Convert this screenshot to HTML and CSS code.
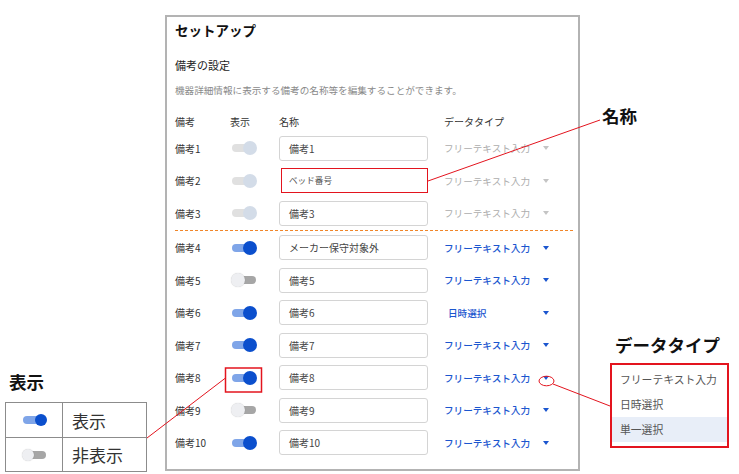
FILE: index.html
```html
<!DOCTYPE html>
<html lang="ja">
<head>
    <meta charset="UTF-8">
    <meta name="viewport" content="width=device-width, initial-scale=1.0">
    <title>セットアップ - 備考の設定</title>
    <link rel="stylesheet" href="styles.css">
</head>
<body>
    <div class="sheet">
        <section class="panel">
            <h1 class="panel-title">セットアップ</h1>
            <h2 class="group-title">備考の設定</h2>
            <p class="group-desc">機器詳細情報に表示する備考の名称等を編集することができます。</p>

            <div class="remarks">
                <div class="remarks-head">
                    <span>備考</span>
                    <span>表示</span>
                    <span>名称</span>
                    <span></span>
                    <span>データタイプ</span>
                </div>

                <div class="remark">
                    <span class="remark-label">備考1</span>
                    <span class="toggle is-disabled"></span>
                    <div class="name-input">備考1</div>
                    <span></span>
                    <div class="type-select is-disabled"><span>フリーテキスト入力</span><i class="caret"></i></div>
                </div>
                <div class="remark">
                    <span class="remark-label">備考2</span>
                    <span class="toggle is-disabled"></span>
                    <div class="name-input is-marked">ベッド番号</div>
                    <span></span>
                    <div class="type-select is-disabled"><span>フリーテキスト入力</span><i class="caret"></i></div>
                </div>
                <div class="remark">
                    <span class="remark-label">備考3</span>
                    <span class="toggle is-disabled"></span>
                    <div class="name-input">備考3</div>
                    <span></span>
                    <div class="type-select is-disabled"><span>フリーテキスト入力</span><i class="caret"></i></div>
                </div>

                <div class="divider"></div>

                <div class="remark">
                    <span class="remark-label">備考4</span>
                    <span class="toggle is-on"></span>
                    <div class="name-input">メーカー保守対象外</div>
                    <span></span>
                    <div class="type-select"><span>フリーテキスト入力</span><i class="caret"></i></div>
                </div>
                <div class="remark">
                    <span class="remark-label">備考5</span>
                    <span class="toggle"></span>
                    <div class="name-input">備考5</div>
                    <span></span>
                    <div class="type-select"><span>フリーテキスト入力</span><i class="caret"></i></div>
                </div>
                <div class="remark">
                    <span class="remark-label">備考6</span>
                    <span class="toggle is-on"></span>
                    <div class="name-input">備考6</div>
                    <span></span>
                    <div class="type-select is-short"><span>日時選択</span><i class="caret"></i></div>
                </div>
                <div class="remark">
                    <span class="remark-label">備考7</span>
                    <span class="toggle is-on"></span>
                    <div class="name-input">備考7</div>
                    <span></span>
                    <div class="type-select"><span>フリーテキスト入力</span><i class="caret"></i></div>
                </div>
                <div class="remark">
                    <span class="remark-label">備考8</span>
                    <span class="toggle is-on"></span>
                    <div class="name-input">備考8</div>
                    <span></span>
                    <div class="type-select"><span>フリーテキスト入力</span><i class="caret"></i></div>
                </div>
                <div class="remark">
                    <span class="remark-label">備考9</span>
                    <span class="toggle"></span>
                    <div class="name-input">備考9</div>
                    <span></span>
                    <div class="type-select"><span>フリーテキスト入力</span><i class="caret"></i></div>
                </div>
                <div class="remark">
                    <span class="remark-label">備考10</span>
                    <span class="toggle is-on"></span>
                    <div class="name-input">備考10</div>
                    <span></span>
                    <div class="type-select"><span>フリーテキスト入力</span><i class="caret"></i></div>
                </div>
            </div>
        </section>

        <!-- annotations -->
        <div class="note-name">名称</div>

        <div class="note-type">
            <div class="note-title">データタイプ</div>
            <ul class="type-menu">
                <li>フリーテキスト入力</li>
                <li>日時選択</li>
                <li class="is-active">単一選択</li>
            </ul>
        </div>

        <div class="legend">
            <div class="note-title">表示</div>
            <table class="legend-table">
                <tr>
                    <td class="legend-icon"><span class="toggle toggle-sm is-on"></span></td>
                    <td>表示</td>
                </tr>
                <tr>
                    <td class="legend-icon"><span class="toggle toggle-sm"></span></td>
                    <td>非表示</td>
                </tr>
            </table>
        </div>

        <svg class="callouts" width="739" height="474" viewBox="0 0 739 474">
            <line x1="428" y1="181" x2="600" y2="120" />
            <rect x="225.5" y="368" width="36" height="24" />
            <line x1="225.5" y1="378" x2="147" y2="438" />
            <ellipse cx="546.5" cy="381" rx="7.5" ry="4.8" />
            <line x1="553" y1="384" x2="610" y2="406" />
        </svg>
    </div>
</body>
</html>
```

FILE: styles.css
```css
* {
    box-sizing: border-box;
}
body {
    margin: 0;
    font-family: "Noto Sans CJK JP", "Noto Sans", sans-serif;
    color: #333;
    background: #fff;
}
.sheet {
    position: relative;
    width: 739px;
    height: 474px;
    overflow: hidden;
}
.panel {
    margin: 15px 0 0 165px;
    width: 415px;
    height: 456px;
    border: 2px solid #b3b3b3;
    padding: 4px 5px 0 8px;
}
.panel-title {
    margin: 0;
    font-size: 13.5px;
    line-height: 18px;
    font-weight: bold;
    color: #111;
}
.group-title {
    margin: 18px 0 0;
    font-size: 11px;
    line-height: 16px;
    font-weight: normal;
    color: #222;
}
.group-desc {
    margin: 10px 0 0;
    font-size: 9.6px;
    line-height: 14px;
    color: #8a8a8a;
}
.remarks-head,
.remark {
    display: grid;
    grid-template-columns: 55px 49px 149px 16px 105px;
    align-items: center;
}
.remarks-head {
    margin-top: 15px;
    height: 18px;
    font-size: 10px;
    color: #333;
}
.remarks {
    width: 398px;
}
.remark {
    height: 32.5px;
}
.remarks-head + .remark {
    margin-top: 2px;
}
.remark-label {
    font-size: 10px;
    color: #333;
}
.divider {
    height: 1px;
    margin-bottom: 1px;
    background-image: repeating-linear-gradient(to right, #f0862a 0 3px, transparent 3px 5px);
}
.name-input {
    height: 25px;
    border: 1px solid #d4d4d4;
    border-radius: 3px;
    padding-left: 9px;
    font-size: 10px;
    line-height: 23px;
    color: #444;
}
.name-input.is-marked {
    border: 1.5px solid #e3141e;
    border-radius: 0;
    margin-left: 2px;
    padding-left: 7px;
    font-size: 8.6px;
    color: #555;
}
.type-select {
    display: flex;
    align-items: center;
    justify-content: space-between;
    font-size: 9.6px;
    font-weight: 500;
    color: #1b56cf;
}
.type-select.is-disabled {
    color: #adadad;
    font-weight: normal;
}
.type-select.is-disabled .caret {
    border-top-color: #c4c4c4;
}
.type-select.is-short span {
    padding-left: 4px;
}
.caret {
    width: 0;
    height: 0;
    border-left: 3.5px solid transparent;
    border-right: 3.5px solid transparent;
    border-top: 4px solid #1b56cf;
}

/* toggle switch */
.toggle {
    position: relative;
    display: block;
    width: 26px;
    height: 14px;
    margin-left: 1px;
}
.toggle::before {
    content: "";
    position: absolute;
    left: 1px;
    right: 1px;
    top: 3px;
    height: 8px;
    border-radius: 4px;
    background: #a6a6a6;
}
.toggle::after {
    content: "";
    position: absolute;
    left: 0;
    top: 0;
    width: 14px;
    height: 14px;
    border-radius: 50%;
    background: #eeeff2;
    box-shadow: 0 0 1px rgba(0, 0, 0, 0.25);
}
.toggle.is-on::before {
    background: #7fa5e8;
}
.toggle.is-on::after {
    left: 12px;
    background: #0b4fcd;
    box-shadow: none;
}
.toggle.is-disabled::before {
    background: #e0e0e0;
}
.toggle.is-disabled::after {
    left: 12px;
    background: #d3dce8;
    box-shadow: none;
}
.toggle-sm {
    width: 25px;
    height: 12px;
    margin: 0 0 0 16px;
}
.toggle-sm::before {
    top: 2px;
}
.toggle-sm::after {
    width: 12px;
    height: 12px;
}
.toggle-sm.is-on::after {
    left: 13px;
}

/* annotations */
.note-title {
    font-size: 17.5px;
    line-height: 22px;
    font-weight: bold;
    color: #111;
}
.note-name {
    position: absolute;
    left: 602px;
    top: 105px;
    font-size: 17.5px;
    line-height: 22px;
    font-weight: bold;
    color: #111;
}
.note-type {
    position: absolute;
    left: 610px;
    top: 334px;
}
.note-type .note-title {
    margin-left: 5px;
}
.type-menu {
    list-style: none;
    margin: 7px 0 0;
    width: 119px;
    height: 85px;
    padding: 2px 0 0;
    border: 2px solid #e3141e;
}
.type-menu li {
    height: 25px;
    line-height: 25px;
    padding-left: 8px;
    font-size: 10.8px;
    color: #555;
}
.type-menu li.is-active {
    background: #e8eef8;
}
.legend {
    position: absolute;
    left: 5px;
    top: 371px;
}
.legend .note-title {
    margin-left: 4px;
}
.legend-table {
    margin-top: 9px;
    border-collapse: collapse;
    width: 142px;
}
.legend-table td {
    border: 1px solid #8c8c8c;
    padding: 0 0 0 9px;
    font-size: 17px;
    color: #333;
    height: 35px;
}
.legend-table tr + tr td {
    height: 34px;
}
.legend-table td.legend-icon {
    width: 57px;
    padding: 0;
}
.callouts {
    position: absolute;
    left: 0;
    top: 0;
    pointer-events: none;
}
.callouts line,
.callouts rect,
.callouts ellipse {
    fill: none;
    stroke: #e3141e;
    stroke-width: 1;
}
.callouts rect {
    stroke-width: 1.5;
}
```
